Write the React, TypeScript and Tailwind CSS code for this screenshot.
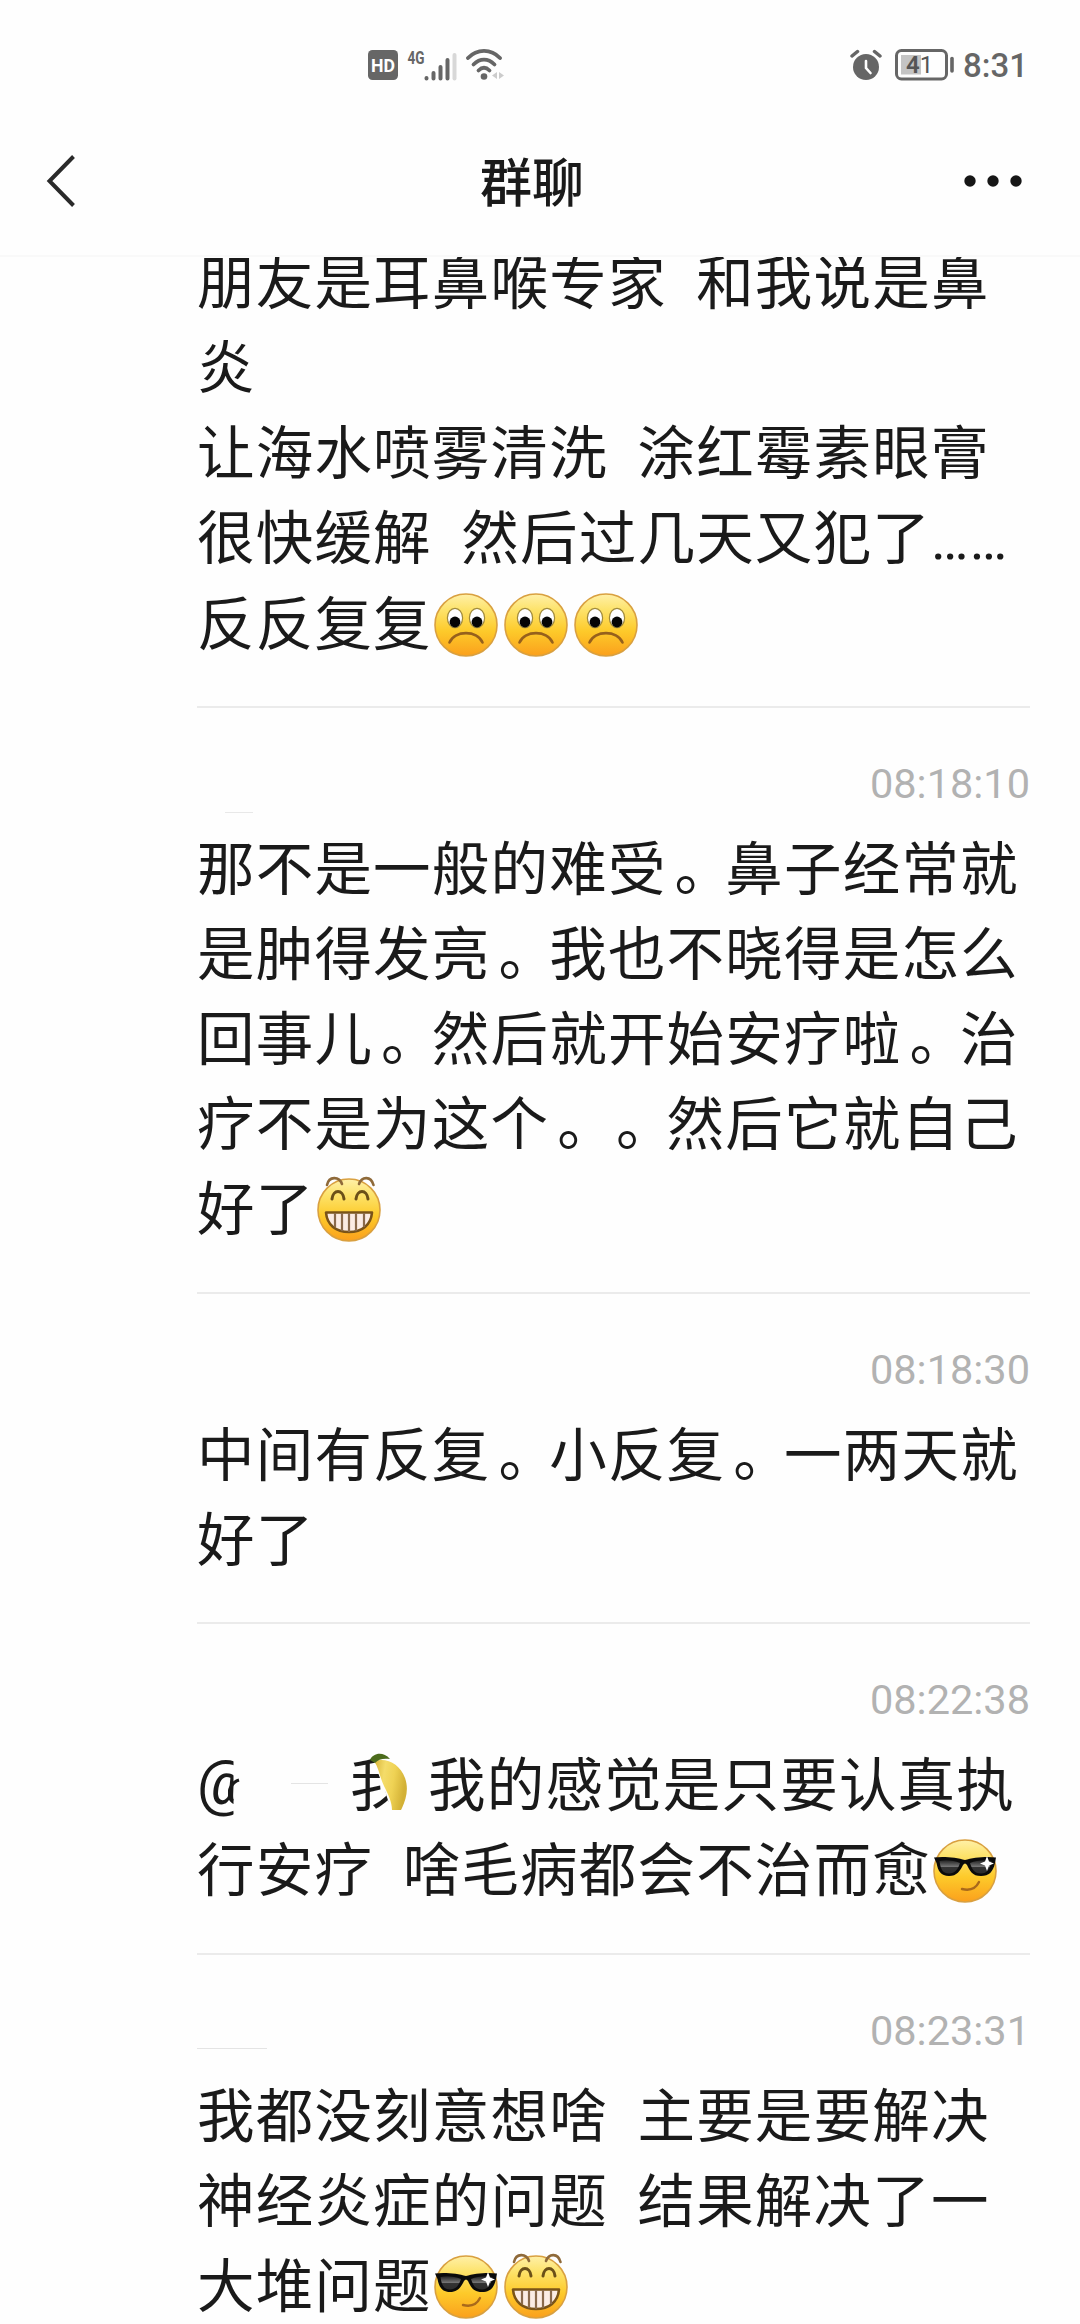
import type { ReactNode } from 'react';

const SadFace = () => (
  <svg viewBox="0 0 64 64" className="ml-[2.5px] mr-[3.1px] inline-block h-16 w-16 align-[-12px]">
    <defs>
      <linearGradient id="face" x1="0" y1="0" x2="0" y2="1">
        <stop offset="0" stopColor="#fff0a8" />
        <stop offset="0.25" stopColor="#fde36c" />
        <stop offset="0.6" stopColor="#fdca2a" />
        <stop offset="1" stopColor="#fba01c" />
      </linearGradient>
    </defs>
    <circle cx="32" cy="32" r="31" fill="url(#face)" stroke="#d9a040" strokeWidth="1.6" />
    <ellipse cx="21" cy="25" rx="7.6" ry="9.6" fill="#fff" stroke="#a08a3c" strokeWidth="1.2" />
    <ellipse cx="43" cy="25" rx="7.6" ry="9.6" fill="#fff" stroke="#a08a3c" strokeWidth="1.2" />
    <circle cx="21" cy="29" r="5.4" fill="#060606" />
    <circle cx="43" cy="29" r="5.4" fill="#060606" />
    <path d="M15.5 49.5C21 37 43 37 48.5 49.5" fill="none" stroke="#96601c" strokeWidth="2.6" strokeLinecap="round" />
  </svg>
);

const GrinFace = () => (
  <svg viewBox="0 0 64 66" className="ml-[2.5px] mr-[3.1px] inline-block h-[66px] w-16 align-[-12px]">
    <circle cx="32" cy="34" r="31" fill="url(#face)" stroke="#d9a040" strokeWidth="1.6" />
    <path d="M10 9C12 0 22 0 25 8M42 8C45 0 54 0 56.5 9" fill="none" stroke="#8f6a3a" strokeWidth="2.6" strokeLinecap="round" />
    <path d="M15 23C16 13 26 13 27 23M39 23C40 13 50 13 51 23" fill="none" stroke="#6b5018" strokeWidth="3" strokeLinecap="round" />
    <path d="M9 36.5H55C54 49 45 56 32 56S10 49 9 36.5Z" fill="#fbece4" stroke="#7a5418" strokeWidth="2.6" strokeLinejoin="round" />
    <path d="M18 37V51M25 37V55M32 37V56M39 37V55M47 37V51" stroke="#8a6a4c" strokeWidth="2.2" />
  </svg>
);

const CoolFace = () => (
  <svg viewBox="0 0 64 64" className="ml-[2.5px] mr-[3.1px] inline-block h-16 w-16 align-[-12px]">
    <defs>
      <linearGradient id="lens" x1="0" y1="0" x2="0" y2="1">
        <stop offset="0" stopColor="#222" />
        <stop offset="0.5" stopColor="#777" />
        <stop offset="0.55" stopColor="#333" />
        <stop offset="1" stopColor="#2c2c2c" />
      </linearGradient>
    </defs>
    <circle cx="32" cy="32" r="31" fill="url(#face)" stroke="#d9a040" strokeWidth="1.6" />
    <path d="M1 18.5C10 17 24 18.5 32 21C40 18.5 54 17 63 18.5L62 24C60 33 56 37 48 37C39 37 37 32 34 26Q32 23 30 26C27 32 24 37 16 37C8 37 5 32 3.5 24Z" fill="#0b0b0b" />
    <path d="M6.5 22C12 20.5 20 21 27 24C25 30 22 34.5 16 34.5C9 34.5 7.5 29 6.5 22Z" fill="url(#lens)" />
    <path d="M37 24C44 21 52 20.5 58.5 22C57 30 54 34.5 48 34.5C41 34.5 39 30 37 24Z" fill="url(#lens)" />
    <path d="M54 17L56 22.5L61 24.5L56 26.5L54 32L52 26.5L47 24.5L52 22.5Z" fill="#fff" />
    <path d="M29 50C37 52 43 49 46 43" fill="none" stroke="#a9691b" strokeWidth="2.4" strokeLinecap="round" />
  </svg>
);

// Sits on top of the character before it and hides that character's right half
const Banana = () => (
  <svg viewBox="0 0 44 66" className="absolute left-5 top-[13px] h-[66px] w-11">
    <defs>
      <linearGradient id="peel" x1="0" y1="0" x2="1" y2="0.25">
        <stop offset="0" stopColor="#d8b436" />
        <stop offset="0.35" stopColor="#f4dc6a" />
        <stop offset="0.65" stopColor="#efd254" />
        <stop offset="1" stopColor="#d3b136" />
      </linearGradient>
    </defs>
    <path d="M3 0H44V66H22C20 48 10 28 5 12Z" fill="#fefefe" />
    <path d="M4 9C17 5 30 12 35 26C39 37 36 47 32 56L31 58H22C22 50 18 42 14 34C10 26 9 16 4 9Z" fill="url(#peel)" />
    <path d="M0 8C3 1 13 -1 20 7C14 6 8 7 5 11Z" fill="#4b6b1c" />
  </svg>
);

const StatusBar = () => (
  <div className="flex h-[130px] items-center justify-between pl-[368px] pr-[52px] font-[Roboto,sans-serif] text-[#666]">
    <div className="flex items-center">
      <svg viewBox="0 0 30 30" className="h-[30px] w-[30px]">
        <rect width="30" height="30" rx="4.5" fill="#666" />
        <text x="3" y="21.5" fontSize="18" fontWeight="700" textLength="24" lengthAdjust="spacingAndGlyphs" fill="#fff" fontFamily="Roboto">HD</text>
      </svg>
      <svg viewBox="0 0 52 36" className="ml-2 h-9 w-[52px]">
        <text x="1.5" y="17" fontSize="19" fontWeight="700" textLength="17" lengthAdjust="spacingAndGlyphs" fill="#666" fontFamily="Roboto">4G</text>
        <g stroke="#666" strokeWidth="4" strokeLinecap="round">
          <path d="M20.5 31.5V31M27.5 31.5V26M34.5 31.5V20M41.5 31.5V13" />
          <path d="M48.5 31.5V8" stroke="#d8d8d8" />
        </g>
      </svg>
      <svg viewBox="0 0 38 34" className="ml-2 h-[34px] w-[38px]">
        <g fill="none" stroke="#666" strokeWidth="3.8" strokeLinecap="round">
          <path d="M2 10C11 0.5 25 0.5 34 10" />
          <path d="M7.5 16.5C14 10 22 10 28.5 16.5" />
          <path d="M12.5 22.5C16 19 20 19 23.5 22.5" />
        </g>
        <circle cx="18" cy="28.5" r="3.3" fill="#666" />
        <path d="M31 24V31L26 27.5ZM33 24V31L38 27.5Z" fill="#ccc" />
      </svg>
    </div>
    <div className="flex items-center">
      <svg viewBox="0 0 32 32" className="h-8 w-8">
        <circle cx="16" cy="18" r="13" fill="#666" />
        <path d="M2 7L7.5 2.5M30 7L24.5 2.5" stroke="#666" strokeWidth="3.5" strokeLinecap="round" />
        <path d="M16 12V19L20.5 24" fill="none" stroke="#fff" strokeWidth="2.6" strokeLinecap="round" />
      </svg>
      <svg viewBox="0 0 60 32" className="ml-[13px] h-8 w-[60px]">
        <rect x="1.5" y="1.5" width="50" height="28.5" rx="5" fill="none" stroke="#666" strokeWidth="3" />
        <rect x="6" y="6" width="20" height="19.5" fill="#c4c4c4" />
        <path d="M57 9.5V22" stroke="#666" strokeWidth="3.6" strokeLinecap="round" />
        <text x="11" y="24" fontSize="24" fill="#555" fontFamily="Roboto">
          <tspan fontWeight="600">4</tspan>
          <tspan fontWeight="400">1</tspan>
        </text>
      </svg>
      <span className="ml-2 text-[33px] font-medium leading-none">8:31</span>
    </div>
  </div>
);

const Header = () => (
  <header className="flex h-[127px] items-center justify-between border-b-2 border-[#f9f9f9] pb-[23px] pl-[46px] pr-[58px]">
    <svg viewBox="0 0 30 54" className="h-[54px] w-[30px]">
      <path d="M27.5 2.5L3.5 27L27.5 51.5" fill="none" stroke="#2a2a2a" strokeWidth="4" />
    </svg>
    <h1 className="ml-6 pb-[3px] text-[52px] font-medium leading-none">群聊</h1>
    <svg viewBox="0 0 58 12" className="h-3 w-[58px]">
      <circle cx="6" cy="6" r="5.7" fill="#161616" />
      <circle cx="29" cy="6" r="5.7" fill="#161616" />
      <circle cx="52" cy="6" r="5.7" fill="#161616" />
    </svg>
  </header>
);

interface MessageProps {
  time: string;
  mark?: ReactNode;
  children: ReactNode;
}

const Message = ({ time, mark, children }: MessageProps) => (
  <section className="relative border-t-2 border-[#ebebeb]">
    <div className="flex h-[115px] justify-end pt-[55px]">
      <time className="font-[Roboto,sans-serif] text-[41.5px] leading-[41px] text-[#b2b2b2]">{time}</time>
    </div>
    {mark}
    <div className="pb-[43.2px]">{children}</div>
  </section>
);

const Line = ({ children }: { children: ReactNode }) => (
  <p className="h-[85.15px] whitespace-pre text-[57.5px] leading-[85px] tracking-[1.2px] [word-spacing:0.7px]">{children}</p>
);

const Stop = () => <span className="inline-block w-[58.7px] pl-2">。</span>;

export default function App() {
  return (
    <div className="h-[2324px] w-[1080px] overflow-hidden bg-[#fefefe] font-['Noto_Sans_CJK_SC',sans-serif] text-[#1a1a1a]">
      <StatusBar />
      <Header />
      <main className="h-[2067px] overflow-hidden pl-[197px] pr-[50px]">
        <div className="-mt-5 pb-[43px]">
          <Line>朋友是耳鼻喉专家  和我说是鼻</Line>
          <Line>炎</Line>
          <Line>让海水喷雾清洗  涂红霉素眼膏</Line>
          <Line>很快缓解  然后过几天又犯了<span className="font-[Roboto,sans-serif] text-[56px]">……</span></Line>
          <Line>反反复复<SadFace /><SadFace /><SadFace /></Line>
        </div>
        <Message time="08:18:10" mark={<div className="absolute left-[28px] top-[104px] h-px w-[28px] bg-[#e8e8e8]" />}>
          <Line>那不是一般的难受<Stop />鼻子经常就</Line>
          <Line>是肿得发亮<Stop />我也不晓得是怎么</Line>
          <Line>回事儿<Stop />然后就开始安疗啦<Stop />治</Line>
          <Line>疗不是为这个<Stop /><Stop />然后它就自己</Line>
          <Line>好了<GrinFace /></Line>
        </Message>
        <Message time="08:18:30">
          <Line>中间有反复<Stop />小反复<Stop />一两天就</Line>
          <Line>好了</Line>
        </Message>
        <Message time="08:22:38">
          <div className="flex">
            <div className="relative w-[153px]">
              <p className="h-[85px] pt-[2px] font-[Roboto,sans-serif] text-[61px] leading-[85px]">@</p>
              <svg viewBox="0 0 30 85" className="absolute left-[31px] top-0 h-[85px] w-[30px]">
                <path d="M5.5 0H30V85H5.5Z" fill="#fefefe" />
                <path d="M11 41C4 43 1 50 1 56C1 59 3 61 5 62" fill="none" stroke="#1a1a1a" strokeWidth="3.2" />
              </svg>
              <div className="absolute left-[94px] top-[44px] h-px w-[37px] bg-[#e4e4e4]" />
            </div>
            <div className="relative w-[78px]">
              <Line>我</Line>
              <Banana />
            </div>
            <Line>我的感觉是只要认真执</Line>
          </div>
          <Line>行安疗  啥毛病都会不治而愈<CoolFace /></Line>
        </Message>
        <Message time="08:23:31" mark={<div className="absolute left-0 top-[93px] h-px w-[70px] bg-[#e4e4e4]" />}>
          <Line>我都没刻意想啥  主要是要解决</Line>
          <Line>神经炎症的问题  结果解决了一</Line>
          <Line>大堆问题<CoolFace /><GrinFace /></Line>
        </Message>
      </main>
    </div>
  );
}
